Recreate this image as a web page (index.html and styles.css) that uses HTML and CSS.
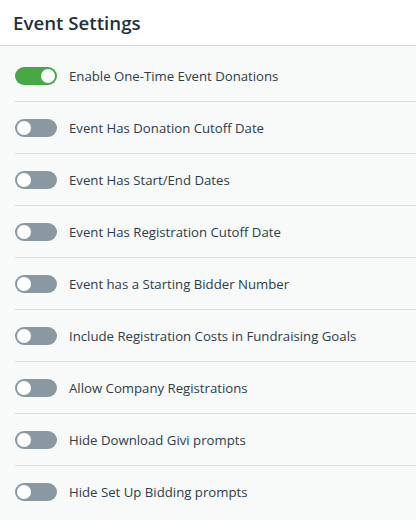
FILE: index.html
```html
<!DOCTYPE html>
<html lang="en">
<head>
    <meta charset="UTF-8">
    <meta name="viewport" content="width=device-width, initial-scale=1.0">
    <title>Event Settings</title>
    <link rel="stylesheet" href="styles.css">
</head>
<body>

<div class="panel">
    <div class="panel-header">
        <h2 class="panel-title">Event Settings</h2>
    </div>
    <ul class="settings-list">
        <li class="setting">
            <label class="switch"><input type="checkbox" checked><span class="slider"></span></label>
            <span class="setting-label">Enable One-Time Event Donations</span>
        </li>
        <li class="setting">
            <label class="switch"><input type="checkbox"><span class="slider"></span></label>
            <span class="setting-label">Event Has Donation Cutoff Date</span>
        </li>
        <li class="setting">
            <label class="switch"><input type="checkbox"><span class="slider"></span></label>
            <span class="setting-label">Event Has Start/End Dates</span>
        </li>
        <li class="setting">
            <label class="switch"><input type="checkbox"><span class="slider"></span></label>
            <span class="setting-label">Event Has Registration Cutoff Date</span>
        </li>
        <li class="setting">
            <label class="switch"><input type="checkbox"><span class="slider"></span></label>
            <span class="setting-label">Event has a Starting Bidder Number</span>
        </li>
        <li class="setting">
            <label class="switch"><input type="checkbox"><span class="slider"></span></label>
            <span class="setting-label">Include Registration Costs in Fundraising Goals</span>
        </li>
        <li class="setting">
            <label class="switch"><input type="checkbox"><span class="slider"></span></label>
            <span class="setting-label">Allow Company Registrations</span>
        </li>
        <li class="setting">
            <label class="switch"><input type="checkbox"><span class="slider"></span></label>
            <span class="setting-label">Hide Download Givi prompts</span>
        </li>
        <li class="setting">
            <label class="switch"><input type="checkbox"><span class="slider"></span></label>
            <span class="setting-label">Hide Set Up Bidding prompts</span>
        </li>
    </ul>
</div>

</body>
</html>
```

FILE: styles.css
```css
/* Page */
body {
    margin: 0;
    background-color: #f8f9f9;
    font-family: 'Open Sans', Lato, sans-serif;
    color: #2b3a47;
}

/* Header */
.panel-header {
    background-color: #ffffff;
    height: 45px;
    border-bottom: 1px solid #d4d7d9;
    display: flex;
    align-items: center;
    padding-left: 13px;
}

.panel-title {
    margin: 0;
    font-size: 18.7px;
    font-weight: 600;
    color: #1e3142;
}

/* List of settings */
.settings-list {
    list-style: none;
    margin: 0;
    padding: 4px 0 0 15px;
}

.setting {
    display: flex;
    align-items: center;
    gap: 12px;
    height: 51px;
    border-bottom: 1px solid #d9dcde;
}

.setting:last-child {
    border-bottom: none;
}

.setting-label {
    font-size: 13.2px;
    color: #2e3d4a;
}

/* Toggle switch */
.switch {
    position: relative;
    display: inline-block;
    width: 42px;
    height: 18px;
    flex-shrink: 0;
}

.switch input {
    opacity: 0;
    width: 0;
    height: 0;
}

.slider {
    position: absolute;
    inset: 0;
    background-color: #8a98a2;
    border-radius: 9px;
    cursor: pointer;
}

.slider::before {
    content: "";
    position: absolute;
    left: 2px;
    top: 2px;
    width: 14px;
    height: 14px;
    border-radius: 50%;
    background-color: #ffffff;
}

.switch input:checked + .slider {
    background-color: #47a846;
}

.switch input:checked + .slider::before {
    left: 26px;
}
```
